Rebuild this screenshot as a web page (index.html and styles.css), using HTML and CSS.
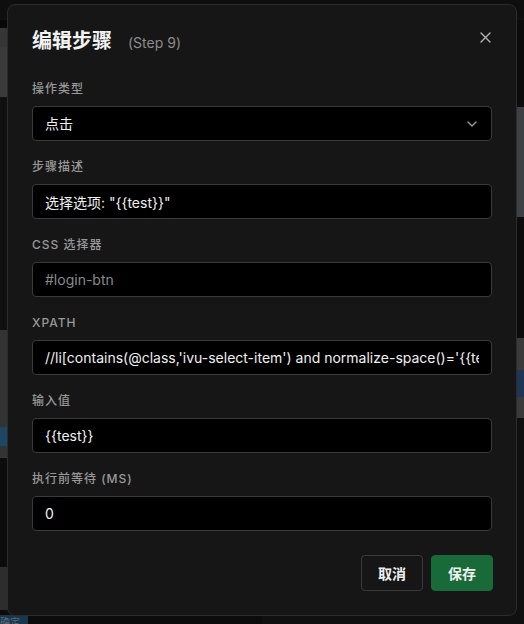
FILE: index.html
```html
<!DOCTYPE html>
<html lang="zh-CN">
<head>
    <meta charset="UTF-8">
    <meta name="viewport" content="width=device-width, initial-scale=1.0">
    <title>编辑步骤</title>
    <link rel="stylesheet" href="styles.css">
</head>
<body>
    <!-- page behind the dialog -->
    <div class="page">
        <div class="col">
            <div class="topbar"></div>
            <div class="subbar"></div>
            <div class="panel panel-tools"></div>
            <div class="list">
                <div class="list-box"></div>
                <div class="list-text">e<br>w</div>
            </div>
            <div class="panel panel-steps">
                <div class="step-active"></div>
            </div>
            <div class="list list-short">
                <div class="list-box"></div>
            </div>
            <div class="panel panel-foot"></div>
            <div class="foot-btns"><span class="ok-btn">确定</span></div>
        </div>
        <div class="col">
            <div class="topbar"></div>
            <div class="subbar subbar-tall"></div>
            <div class="panel panel-info"></div>
            <div class="list list-mid"></div>
            <div class="panel panel-row">
                <div class="row-blue"></div>
            </div>
            <div class="list"></div>
        </div>
    </div>

    <div class="backdrop">
        <div class="modal">
            <button class="close" type="button" aria-label="关闭">
                <svg width="11" height="11" viewBox="0 0 11 11"><path d="M1 1L10 10M10 1L1 10" stroke="#b4b4b4" stroke-width="1.4" fill="none" stroke-linecap="round"/></svg>
            </button>
            <h2 class="modal-title">编辑步骤<span class="step-no">(Step 9)</span></h2>

            <form id="stepForm">
                <div class="field">
                    <label for="action">操作类型</label>
                    <div class="select-wrap">
                        <select id="action">
                            <option>点击</option>
                            <option>输入</option>
                            <option>等待</option>
                        </select>
                        <svg class="chevron" width="10" height="6" viewBox="0 0 10 6"><path d="M1 1L5 5L9 1" stroke="#a0a0a0" stroke-width="1.3" fill="none" stroke-linecap="round" stroke-linejoin="round"/></svg>
                    </div>
                </div>
                <div class="field">
                    <label for="desc">步骤描述</label>
                    <input type="text" id="desc" value='选择选项: "{{test}}"'>
                </div>
                <div class="field">
                    <label for="css">CSS 选择器</label>
                    <input type="text" id="css" placeholder="#login-btn">
                </div>
                <div class="field">
                    <label for="xpath">XPath</label>
                    <input type="text" id="xpath" value="//li[contains(@class,'ivu-select-item') and normalize-space()='{{test}}']">
                </div>
                <div class="field">
                    <label for="value">输入值</label>
                    <input type="text" id="value" value="{{test}}">
                </div>
                <div class="field">
                    <label for="wait">执行前等待 (ms)</label>
                    <input type="text" id="wait" value="0">
                </div>

                <div class="actions">
                    <button type="button" class="btn">取消</button>
                    <button type="submit" class="btn btn-primary">保存</button>
                </div>
            </form>
        </div>
    </div>
</body>
</html>
```

FILE: styles.css
```css
* {
    box-sizing: border-box;
}
body {
    margin: 0;
    font-family: Inter, "Noto Sans CJK SC", sans-serif;
    background: #181818;
    color: #eee;
    height: 624px;
    overflow: hidden;
}

/* underlying page */
.page {
    display: grid;
    grid-template-columns: 1fr 1fr;
    height: 624px;
}
.col {
    display: flex;
    flex-direction: column;
}
.topbar {
    height: 20px;
    background: #1c1c1c;
    border-bottom: 2px solid #222;
}
.subbar {
    height: 8px;
    background: #101010;
}
.subbar-tall {
    height: 87px;
    background: #181818;
}
.panel {
    background: #747474;
}
.panel-tools {
    height: 69px;
    border-top: 19px solid #6c6c6c;
}
.list {
    flex: 1;
    background: #202020;
    padding: 36px 0 0 10px;
}
.list-box {
    width: 120px;
    height: 24px;
    border: 1px solid #555;
    border-radius: 4px;
}
.list-text {
    margin-top: 6px;
    font-size: 18px;
    line-height: 20px;
    color: #999;
}
.panel-steps {
    height: 128px;
    background: #666;
    display: flex;
    flex-direction: column;
    justify-content: flex-end;
    padding-bottom: 11px;
    border-bottom: 1px solid #707070;
}
.step-active {
    height: 19px;
    background: #3a8cc4;
}
.list-short {
    flex: none;
    height: 109px;
    background: #181818;
    padding-top: 9px;
}
.panel-foot {
    height: 43px;
    background: #5a5a5a;
}
.foot-btns {
    height: 14px;
    background: #181818;
}
.ok-btn {
    display: inline-block;
    width: 28px;
    height: 14px;
    background: #2f6fa0;
    color: #bcd;
    font-size: 10px;
    line-height: 14px;
}
.panel-info {
    height: 110px;
    background: #7a8088;
}
.list-mid {
    flex: none;
    height: 121px;
    background: #181818;
}
.panel-row {
    height: 80px;
    padding-top: 32px;
    background: #747474;
}
.row-blue {
    height: 27px;
    background: #3e6aa8;
}

/* dialog */
.backdrop {
    position: fixed;
    inset: 0;
    background: rgba(0, 0, 0, 0.5);
    padding: 4px 7px 0;
}
.modal {
    position: relative;
    width: 510px;
    background: #161616;
    border: 1px solid #2c2c2c;
    border-radius: 8px;
    padding: 22px 24px 24px;
}
.close {
    position: absolute;
    top: 22px;
    right: 21px;
    width: 20px;
    height: 20px;
    padding: 0;
    border: none;
    background: none;
    display: flex;
    align-items: center;
    justify-content: center;
    cursor: pointer;
}
.modal-title {
    margin: 0 0 24px;
    font-size: 20px;
    line-height: 28px;
    font-weight: 600;
    color: #f2f2f2;
}
.step-no {
    margin-left: 16px;
    font-size: 14px;
    font-weight: 400;
    color: #8c8c8c;
}
.field {
    margin-bottom: 18px;
}
.field label {
    display: block;
    margin-bottom: 9px;
    font-size: 12px;
    line-height: 16px;
    font-weight: 500;
    letter-spacing: 1px;
    text-transform: uppercase;
    color: #999;
}
.field input,
.field select {
    display: block;
    width: 100%;
    height: 35px;
    padding: 0 12px;
    background: #000;
    border: 1px solid #3a3a3a;
    border-radius: 4px;
    color: #f0f0f0;
    font-family: inherit;
    font-size: 14px;
    outline: none;
}
.field input::placeholder {
    color: #8a8a8a;
}
.select-wrap {
    position: relative;
}
.field select {
    appearance: none;
    -webkit-appearance: none;
}
.chevron {
    position: absolute;
    right: 15px;
    top: 15px;
    pointer-events: none;
}
.actions {
    display: flex;
    justify-content: flex-end;
    gap: 8px;
    margin-top: 24px;
    margin-right: -1px;
}
.field:last-of-type {
    margin-bottom: 0;
}
.btn {
    height: 36px;
    padding: 0 16px;
    border: 1px solid #3a3a3a;
    border-radius: 4px;
    background: #161616;
    color: #f0f0f0;
    font-family: inherit;
    font-size: 14px;
    font-weight: 600;
    cursor: pointer;
}
.btn-primary {
    background: #196a39;
    border-color: #196a39;
}
```
